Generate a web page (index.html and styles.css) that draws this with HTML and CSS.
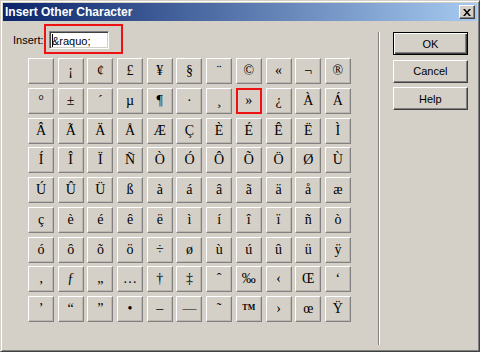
FILE: index.html
```
<!DOCTYPE html>
<html>
<head>
<meta charset="utf-8">
<link rel="stylesheet" href="styles.css">
</head>
<body>
<div class="window">
  <div class="titlebar">
    <span class="title">Insert Other Character</span>
    <span class="close"><svg width="8" height="7" viewBox="0 0 8 7"><path d="M0 0h2l2 2.5L6 0h2L5 3.5 8 7H6L4 4.5 2 7H0l3-3.5z" fill="#000"/></svg></span>
  </div>
  <div class="body">
    <div class="left">
      <div class="insert-row">
        <span class="label">Insert:</span>
        <div class="field"><span class="caret"></span>&amp;raquo;</div>
      </div>
      <div class="grid">
        <div class="cell">&nbsp;</div><div class="cell">¡</div><div class="cell">¢</div><div class="cell">£</div><div class="cell">¥</div><div class="cell">§</div><div class="cell">¨</div><div class="cell">©</div><div class="cell">«</div><div class="cell">¬</div><div class="cell">®</div>
        <div class="cell">°</div><div class="cell">±</div><div class="cell">´</div><div class="cell">µ</div><div class="cell">¶</div><div class="cell">·</div><div class="cell">¸</div><div class="cell marked">»</div><div class="cell">¿</div><div class="cell">À</div><div class="cell">Á</div>
        <div class="cell">Â</div><div class="cell">Ã</div><div class="cell">Ä</div><div class="cell">Å</div><div class="cell">Æ</div><div class="cell">Ç</div><div class="cell">È</div><div class="cell">É</div><div class="cell">Ê</div><div class="cell">Ë</div><div class="cell">Ì</div>
        <div class="cell">Í</div><div class="cell">Î</div><div class="cell">Ï</div><div class="cell">Ñ</div><div class="cell">Ò</div><div class="cell">Ó</div><div class="cell">Ô</div><div class="cell">Õ</div><div class="cell">Ö</div><div class="cell">Ø</div><div class="cell">Ù</div>
        <div class="cell">Ú</div><div class="cell">Û</div><div class="cell">Ü</div><div class="cell">ß</div><div class="cell">à</div><div class="cell">á</div><div class="cell">â</div><div class="cell">ã</div><div class="cell">ä</div><div class="cell">å</div><div class="cell">æ</div>
        <div class="cell">ç</div><div class="cell">è</div><div class="cell">é</div><div class="cell">ê</div><div class="cell">ë</div><div class="cell">ì</div><div class="cell">í</div><div class="cell">î</div><div class="cell">ï</div><div class="cell">ñ</div><div class="cell">ò</div>
        <div class="cell">ó</div><div class="cell">ô</div><div class="cell">õ</div><div class="cell">ö</div><div class="cell">÷</div><div class="cell">ø</div><div class="cell">ù</div><div class="cell">ú</div><div class="cell">û</div><div class="cell">ü</div><div class="cell">ÿ</div>
        <div class="cell">‚</div><div class="cell">ƒ</div><div class="cell">„</div><div class="cell">…</div><div class="cell">†</div><div class="cell">‡</div><div class="cell">ˆ</div><div class="cell">‰</div><div class="cell">‹</div><div class="cell">Œ</div><div class="cell">‘</div>
        <div class="cell">’</div><div class="cell">“</div><div class="cell">”</div><div class="cell">•</div><div class="cell">–</div><div class="cell">—</div><div class="cell">˜</div><div class="cell tm">TM</div><div class="cell">›</div><div class="cell">œ</div><div class="cell">Ÿ</div>
      </div>
    </div>
    <div class="sep"></div>
    <div class="buttons">
      <div class="btn default">OK</div>
      <div class="btn">Cancel</div>
      <div class="btn">Help</div>
    </div>
  </div>
  <div class="mark-insert"></div>
</div>
</body>
</html>
```
FILE: styles.css
```
html, body {
  margin: 0;
  padding: 0;
  background: #d4d0c8;
}
.window {
  position: relative;
  box-sizing: border-box;
  width: 480px;
  height: 352px;
  padding: 2px;
  background: #d4d0c8;
  border-top: 1px solid #d4d0c8;
  border-left: 1px solid #d4d0c8;
  border-right: 1px solid #404040;
  border-bottom: 1px solid #404040;
  box-shadow: inset 1px 1px 0 #ffffff, inset -1px -1px 0 #808080;
  font-family: "Liberation Sans", Arial, sans-serif;
  font-size: 11px;
  color: #000;
}
.titlebar {
  height: 18px;
  display: flex;
  align-items: center;
  justify-content: space-between;
  background: linear-gradient(to right, #0a246a, #a6caf0);
  padding: 0 2px 0 2px;
}
.title {
  color: #fff;
  font-weight: bold;
  font-size: 12px;
  letter-spacing: 0;
}
.close {
  box-sizing: border-box;
  width: 16px;
  height: 14px;
  background: #d4d0c8;
  border-top: 1px solid #fff;
  border-left: 1px solid #fff;
  border-right: 1px solid #404040;
  border-bottom: 1px solid #404040;
  box-shadow: inset -1px -1px 0 #808080;
  display: flex;
  align-items: center;
  justify-content: center;
}
.body {
  display: flex;
  height: 328px;
}
.left {
  padding: 10px 0 0 10px;
}
.insert-row {
  display: flex;
  align-items: center;
  height: 18px;
}
.label {
  width: 36px;
}
.field {
  box-sizing: border-box;
  width: 60px;
  height: 18px;
  background: #fff;
  border-top: 1px solid #808080;
  border-left: 1px solid #808080;
  border-right: 1px solid #fff;
  border-bottom: 1px solid #fff;
  box-shadow: inset 1px 1px 0 #404040, inset -1px -1px 0 #d4d0c8;
  padding: 1px 0 0 2px;
  line-height: 14px;
  display: flex;
  align-items: center;
}
.caret {
  width: 1px;
  height: 13px;
  background: #000;
  margin-right: -1px;
}
.grid {
  margin: 9px 0 0 15px;
  display: grid;
  grid-template-columns: repeat(11, 26px);
  grid-auto-rows: 26px;
  column-gap: 3.7px;
  row-gap: 3.75px;
}
.cell {
  box-sizing: border-box;
  background: #d4d0c8;
  border-top: 1px solid #fff;
  border-left: 1px solid #fff;
  border-right: 1px solid #808080;
  border-bottom: 1px solid #808080;
  box-shadow: inset -1px -1px 0 #bcb8b0;
  font-family: "Liberation Serif", "Times New Roman", serif;
  font-size: 14px;
  display: flex;
  align-items: center;
  justify-content: center;
}
.cell.tm {
  font-size: 8px;
  font-weight: bold;
  align-items: flex-start;
  padding-top: 6px;
}
.cell.marked {
  border: 2px solid #ee1111;
  box-shadow: none;
}
.sep {
  width: 1px;
  border-right: 1px solid #fff;
  background: #808080;
  margin: 11px 0 4px 27px;
}
.buttons {
  display: flex;
  flex-direction: column;
  gap: 4.5px;
  margin: 11px 0 0 13px;
}
.btn {
  box-sizing: border-box;
  width: 75px;
  height: 23px;
  background: #d4d0c8;
  border-top: 1px solid #fff;
  border-left: 1px solid #fff;
  border-right: 1px solid #404040;
  border-bottom: 1px solid #404040;
  box-shadow: inset -1px -1px 0 #808080;
  display: flex;
  align-items: center;
  justify-content: center;
}
.btn.default {
  border: 1px solid #000;
  box-shadow: inset 1px 1px 0 #fff, inset -1px -1px 0 #404040, inset -2px -2px 0 #808080;
}
.mark-insert {
  position: absolute;
  left: 43px;
  top: 23px;
  width: 75px;
  height: 26px;
  border: 2px solid #ee1111;
}
```
